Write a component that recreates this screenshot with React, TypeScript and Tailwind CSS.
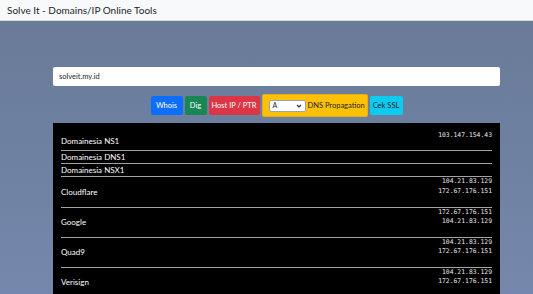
import React from 'react';

interface Row {
    name: string;
    ips: string[];
}

const ROWS: Row[] = [
    { name: 'Domainesia NS1', ips: ['103.147.154.43'] },
    { name: 'Domainesia DNS1', ips: [] },
    { name: 'Domainesia NSX1', ips: [] },
    { name: 'Cloudflare', ips: ['104.21.83.129', '172.67.176.151'] },
    { name: 'Google', ips: ['172.67.176.151', '104.21.83.129'] },
    { name: 'Quad9', ips: ['104.21.83.129', '172.67.176.151'] },
    { name: 'Verisign', ips: ['104.21.83.129', '172.67.176.151'] },
];

const App: React.FC = () => {
    return (
        <div className="min-h-screen flex flex-col font-['Lato','Liberation_Sans',sans-serif] bg-gradient-to-b from-[#687a96] to-[#7688ad]">
            <header className="h-[21px] flex items-center px-[7px] bg-[#f8f9fa] border-b border-[#d5d9df] text-[10px] text-[#212529]">
                Solve It - Domains/IP Online Tools
            </header>

            <main className="ml-[53px] w-[447px] pt-[46px]">
                <input
                    type="text"
                    defaultValue="solveit.my.id"
                    className="block w-full h-[19px] rounded-[2px] bg-white px-[6px] text-[7.5px] text-[#212529] outline-none"
                />

                <div className="mt-[8px] flex items-center justify-center gap-[2px] text-[7.5px]">
                    <button className="h-[19px] w-[32px] bg-[#0d6efd] text-white rounded-[2px]">Whois</button>
                    <button className="h-[19px] w-[22px] bg-[#198754] text-white rounded-[2px]">Dig</button>
                    <button className="h-[19px] w-[51px] bg-[#dc3545] text-white rounded-[2px]">Host IP / PTR</button>
                    <div className="h-[23px] w-[106px] flex items-center gap-[2px] pl-[6px] bg-[#ffc107] border border-[#e8ad10] rounded-[2px] text-[#212529]">
                        <div className="h-[12px] w-[37px] flex items-center justify-between px-[3px] bg-white border border-[#9ca3af] rounded-[2px] text-[7px]">
                            <span>A</span>
                            <svg width="6" height="4" viewBox="0 0 6 4" fill="none" stroke="#333" strokeWidth="1.2">
                                <path d="M1 1l2 2 2-2" />
                            </svg>
                        </div>
                        <span>DNS Propagation</span>
                    </div>
                    <button className="h-[19px] w-[33px] bg-[#0dcaf0] text-[#212529] rounded-[2px]">Cek SSL</button>
                </div>

                <div className="mt-[6px] bg-black px-[8px] pt-[8px] pb-[12px] text-white">
                    {ROWS.map((row, i) => (
                        <div key={row.name} className={i > 0 ? 'border-t border-[#a3a3a3]' : ''}>
                            <div className="flex items-center justify-between">
                                <span className="text-[8px] leading-[12px] text-white">{row.name}</span>
                                {row.ips.length > 0 && (
                                    <div className="flex flex-col items-end font-['DejaVu_Sans_Mono','Liberation_Mono',monospace] text-[6.4px] leading-[9.7px] text-[#e5e5e5]">
                                        {row.ips.map((ip) => (
                                            <span key={ip}>{ip}</span>
                                        ))}
                                        <span>&nbsp;</span>
                                    </div>
                                )}
                            </div>
                        </div>
                    ))}
                </div>
            </main>
        </div>
    );
};

export default App;
